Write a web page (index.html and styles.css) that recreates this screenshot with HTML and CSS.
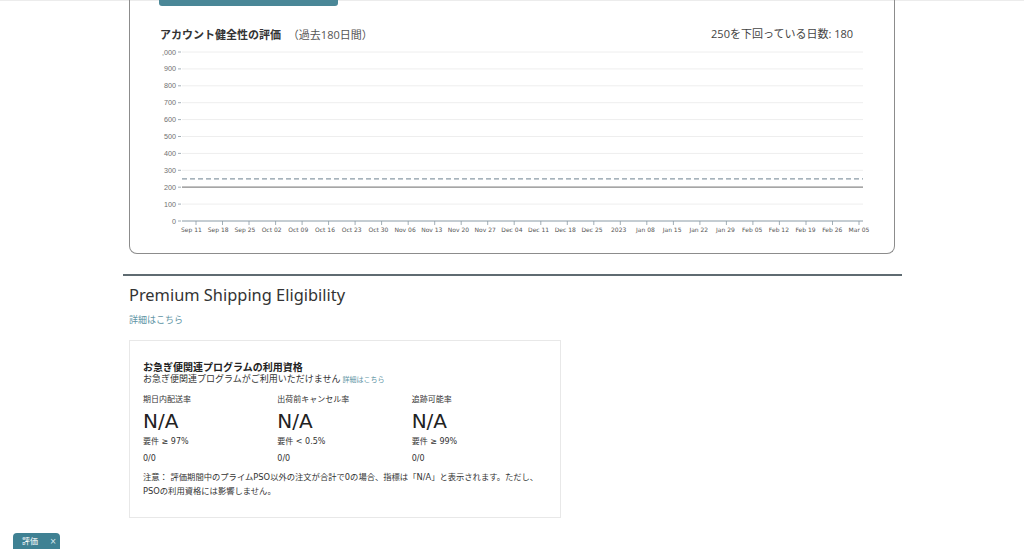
FILE: index.html
```html
<!DOCTYPE html>
<html lang="ja">
<head>
    <meta charset="UTF-8">
    <meta name="viewport" content="width=device-width, initial-scale=1.0">
    <title>アカウント健全性</title>
    <link rel="stylesheet" href="styles.css">
</head>
<body>

<div class="page">
    <div class="main">

        <!-- アカウント健全性の評価 -->
        <div class="chart-card">
            <div class="tab-bar"></div>
            <div class="chart-head">
                <div class="chart-title"><strong>アカウント健全性の評価</strong> <span class="period">（過去180日間）</span></div>
                <div class="chart-count">250を下回っている日数: 180</div>
            </div>
            <svg class="chart" width="764" height="208" viewBox="0 0 764 208">
                <g class="grid">
                    <line x1="52" y1="7" x2="733" y2="7"/>
                    <line x1="52" y1="23.9" x2="733" y2="23.9"/>
                    <line x1="52" y1="40.8" x2="733" y2="40.8"/>
                    <line x1="52" y1="57.7" x2="733" y2="57.7"/>
                    <line x1="52" y1="74.6" x2="733" y2="74.6"/>
                    <line x1="52" y1="91.5" x2="733" y2="91.5"/>
                    <line x1="52" y1="108.4" x2="733" y2="108.4"/>
                    <line x1="52" y1="125.3" x2="733" y2="125.3"/>
                    <line x1="52" y1="159.1" x2="733" y2="159.1"/>
                </g>
                <g class="ytick">
                    <line x1="48" y1="7" x2="51" y2="7"/>
                    <line x1="48" y1="23.9" x2="51" y2="23.9"/>
                    <line x1="48" y1="40.8" x2="51" y2="40.8"/>
                    <line x1="48" y1="57.7" x2="51" y2="57.7"/>
                    <line x1="48" y1="74.6" x2="51" y2="74.6"/>
                    <line x1="48" y1="91.5" x2="51" y2="91.5"/>
                    <line x1="48" y1="108.4" x2="51" y2="108.4"/>
                    <line x1="48" y1="125.3" x2="51" y2="125.3"/>
                    <line x1="48" y1="142.2" x2="51" y2="142.2"/>
                    <line x1="48" y1="159.1" x2="51" y2="159.1"/>
                    <line x1="48" y1="176" x2="51" y2="176"/>
                </g>
                <g class="ylabel">
                    <text x="46" y="9.5">,000</text>
                    <text x="46" y="26.4">900</text>
                    <text x="46" y="43.3">800</text>
                    <text x="46" y="60.2">700</text>
                    <text x="46" y="77.1">600</text>
                    <text x="46" y="94">500</text>
                    <text x="46" y="110.9">400</text>
                    <text x="46" y="127.8">300</text>
                    <text x="46" y="144.7">200</text>
                    <text x="46" y="161.6">100</text>
                    <text x="46" y="178.5">0</text>
                </g>
                <line class="threshold" x1="52" y1="133.8" x2="733" y2="133.8"/>
                <line class="score" x1="52" y1="142.2" x2="733" y2="142.2"/>
                <line class="axis" x1="52" y1="176" x2="733" y2="176"/>
                <g class="xtick">
                    <line x1="66" y1="176" x2="66" y2="180"/>
                    <line x1="92.5" y1="176" x2="92.5" y2="180"/>
                    <line x1="119" y1="176" x2="119" y2="180"/>
                    <line x1="145.6" y1="176" x2="145.6" y2="180"/>
                    <line x1="172.1" y1="176" x2="172.1" y2="180"/>
                    <line x1="198.6" y1="176" x2="198.6" y2="180"/>
                    <line x1="225.1" y1="176" x2="225.1" y2="180"/>
                    <line x1="251.6" y1="176" x2="251.6" y2="180"/>
                    <line x1="278.2" y1="176" x2="278.2" y2="180"/>
                    <line x1="304.7" y1="176" x2="304.7" y2="180"/>
                    <line x1="331.2" y1="176" x2="331.2" y2="180"/>
                    <line x1="357.7" y1="176" x2="357.7" y2="180"/>
                    <line x1="384.2" y1="176" x2="384.2" y2="180"/>
                    <line x1="410.8" y1="176" x2="410.8" y2="180"/>
                    <line x1="437.3" y1="176" x2="437.3" y2="180"/>
                    <line x1="463.8" y1="176" x2="463.8" y2="180"/>
                    <line x1="490.3" y1="176" x2="490.3" y2="180"/>
                    <line x1="516.8" y1="176" x2="516.8" y2="180"/>
                    <line x1="543.4" y1="176" x2="543.4" y2="180"/>
                    <line x1="569.9" y1="176" x2="569.9" y2="180"/>
                    <line x1="596.4" y1="176" x2="596.4" y2="180"/>
                    <line x1="622.9" y1="176" x2="622.9" y2="180"/>
                    <line x1="649.4" y1="176" x2="649.4" y2="180"/>
                    <line x1="676" y1="176" x2="676" y2="180"/>
                    <line x1="702.5" y1="176" x2="702.5" y2="180"/>
                    <line x1="729" y1="176" x2="729" y2="180"/>
                </g>
                <g class="xlabel">
                    <text x="61.5" y="186.8">Sep 11</text>
                    <text x="88.2" y="186.8">Sep 18</text>
                    <text x="114.9" y="186.8">Sep 25</text>
                    <text x="141.6" y="186.8">Oct 02</text>
                    <text x="168.3" y="186.8">Oct 09</text>
                    <text x="195" y="186.8">Oct 16</text>
                    <text x="221.7" y="186.8">Oct 23</text>
                    <text x="248.4" y="186.8">Oct 30</text>
                    <text x="275.1" y="186.8">Nov 06</text>
                    <text x="301.8" y="186.8">Nov 13</text>
                    <text x="328.5" y="186.8">Nov 20</text>
                    <text x="355.2" y="186.8">Nov 27</text>
                    <text x="381.9" y="186.8">Dec 04</text>
                    <text x="408.6" y="186.8">Dec 11</text>
                    <text x="435.3" y="186.8">Dec 18</text>
                    <text x="462" y="186.8">Dec 25</text>
                    <text x="488.7" y="186.8">2023</text>
                    <text x="515.4" y="186.8">Jan 08</text>
                    <text x="542.1" y="186.8">Jan 15</text>
                    <text x="568.8" y="186.8">Jan 22</text>
                    <text x="595.5" y="186.8">Jan 29</text>
                    <text x="622.2" y="186.8">Feb 05</text>
                    <text x="648.9" y="186.8">Feb 12</text>
                    <text x="675.6" y="186.8">Feb 19</text>
                    <text x="702.3" y="186.8">Feb 26</text>
                    <text x="729" y="186.8">Mar 05</text>
                </g>
            </svg>
        </div>

        <hr class="divider">

        <!-- Premium Shipping -->
        <div class="section">
            <h2>Premium Shipping Eligibility</h2>
            <a class="more-link" href="#">詳細はこちら</a>

            <div class="pso-card">
                <div class="pso-title">お急ぎ便関連プログラムの利用資格</div>
                <div class="pso-sub">お急ぎ便関連プログラムがご利用いただけません <a class="small-link" href="#">詳細はこちら</a></div>

                <div class="metrics">
                    <div class="metric">
                        <div class="metric-label">期日内配送率</div>
                        <div class="metric-value">N/A</div>
                        <div class="metric-req">要件 ≥ 97%</div>
                        <div class="metric-count">0/0</div>
                    </div>
                    <div class="metric">
                        <div class="metric-label">出荷前キャンセル率</div>
                        <div class="metric-value">N/A</div>
                        <div class="metric-req">要件 &lt; 0.5%</div>
                        <div class="metric-count">0/0</div>
                    </div>
                    <div class="metric">
                        <div class="metric-label">追跡可能率</div>
                        <div class="metric-value">N/A</div>
                        <div class="metric-req">要件 ≥ 99%</div>
                        <div class="metric-count">0/0</div>
                    </div>
                </div>

                <p class="note">注意： 評価期間中のプライムPSO以外の注文が合計で0の場合、指標は「N/A」と表示されます。ただし、<br>PSOの利用資格には影響しません。</p>
            </div>
        </div>

    </div>
</div>

<!-- 画面下のタブ -->
<div class="bottom-tab">評価 <span class="close">×</span></div>

</body>
</html>
```

FILE: styles.css
```css
body {
    margin: 0;
    font-family: "DejaVu Sans", "Noto Sans CJK JP", sans-serif;
    background-color: #fff;
    color: #333;
}
.page {
    border-top: 1px solid #ececec;
}
.main {
    width: 779px;
    margin-left: 123px;
}
.chart-card {
    margin: -1px 7px 0 6px;
    border: 1px solid #8c8c8c;
    border-top: none;
    border-radius: 0 0 8px 8px;
}
.tab-bar {
    width: 179px;
    height: 6px;
    margin-left: 29px;
    background-color: #4a8797;
    border-radius: 0 0 3px 3px;
}
.chart-head {
    display: flex;
    justify-content: space-between;
    margin: 20px 41px 0 30px;
    height: 16px;
    line-height: 16px;
    font-family: "Open Sans", "Noto Sans CJK JP", sans-serif;
    font-size: 11px;
}
.chart-title strong {
    font-family: "Noto Sans CJK JP", sans-serif;
    font-weight: bold;
    color: #333;
}
.period {
    color: #555;
    margin-left: 4px;
}
.chart-count {
    color: #444;
}
.chart {
    display: block;
    margin-top: 3px;
}
.grid line {
    stroke: #eeeeee;
    stroke-width: 1;
}
.ytick line,
.xtick line {
    stroke: #8a9aa5;
    stroke-width: 0.8;
}
.ylabel text {
    font-family: "Liberation Sans", sans-serif;
    font-size: 7.2px;
    fill: #707070;
    text-anchor: end;
}
.xlabel text {
    font-family: "DejaVu Sans", sans-serif;
    font-size: 6px;
    fill: #555;
    text-anchor: middle;
}
.threshold {
    stroke: #8a9aa5;
    stroke-width: 1.2;
    stroke-dasharray: 5 3;
}
.score {
    stroke: #888;
    stroke-width: 1.2;
}
.axis {
    stroke: #8a9aa5;
    stroke-width: 1;
}
.divider {
    margin: 20px 0 0 0;
    border: none;
    border-top: 2px solid #5f6b71;
}
.section {
    padding-left: 6px;
}
h2 {
    margin: 8px 0 0 0;
    font-family: "Noto Sans", sans-serif;
    font-size: 16.4px;
    font-weight: normal;
    line-height: 22px;
    color: #333;
}
.more-link {
    display: block;
    margin-top: 8px;
    font-family: "Noto Sans CJK JP", sans-serif;
    font-size: 9px;
    line-height: 12px;
    color: #5f95a5;
    text-decoration: none;
}
.pso-card {
    width: 403px;
    margin-top: 14px;
    padding: 19px 14px 19px 13px;
    border: 1px solid #e8e8e8;
    font-family: "Noto Sans CJK JP", sans-serif;
}
.pso-title {
    font-size: 10px;
    font-weight: bold;
    line-height: 13px;
    color: #222;
}
.pso-sub {
    font-size: 9px;
    line-height: 12px;
    color: #333;
}
.small-link {
    font-size: 7px;
    color: #5f95a5;
    text-decoration: none;
}
.metrics {
    display: flex;
    margin-top: 8px;
}
.metric {
    width: 134.5px;
    font-family: "DejaVu Sans", "Noto Sans CJK JP", sans-serif;
    font-size: 8px;
    color: #333;
}
.metric-label {
    line-height: 12px;
    font-family: "Noto Sans CJK JP", sans-serif;
}
.metric-value {
    margin-top: 4px;
    font-size: 20px;
    line-height: 24px;
    color: #222;
}
.metric-req {
    margin-top: 3px;
    line-height: 12px;
}
.metric-count {
    margin-top: 5px;
    line-height: 12px;
}
.note {
    margin: 5px 0 0 0;
    font-family: "DejaVu Sans", "Noto Sans CJK JP", sans-serif;
    font-size: 8.3px;
    line-height: 14px;
    color: #333;
}
.bottom-tab {
    position: fixed;
    left: 13px;
    bottom: 0;
    width: 47px;
    height: 16px;
    box-sizing: border-box;
    padding-left: 9px;
    background-color: #3f8193;
    border-radius: 4px 4px 0 0;
    font-family: "Noto Sans CJK JP", sans-serif;
    font-size: 8px;
    line-height: 16px;
    color: #fff;
}
.bottom-tab .close {
    margin-left: 10px;
    font-family: "DejaVu Sans", sans-serif;
    font-size: 8px;
    color: #dfeef2;
}
```
